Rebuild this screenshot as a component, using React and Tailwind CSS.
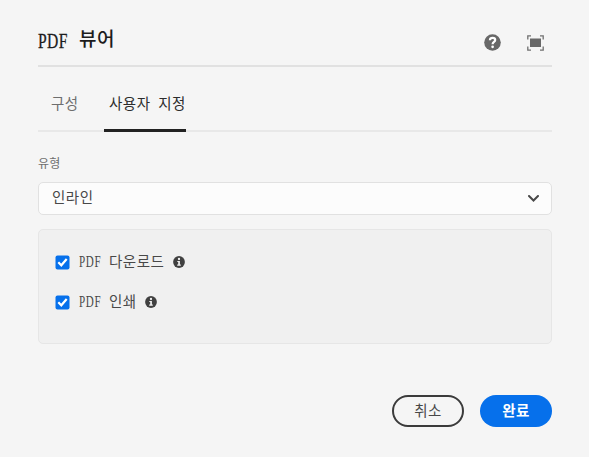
import React from 'react';

function HelpIcon() {
  return (
    <svg className="block h-[17px] w-[17px]" viewBox="0 0 17 17">
      <circle cx="8.5" cy="8.5" r="8.3" fill="#686868" />
      <path d="M5.900 6.200C6 4.700 7.100 3.900 8.600 3.900C10.200 3.900 11.200 4.700 11.200 6C11.200 7.900 8.600 7.900 8.600 10.200" fill="none" stroke="#fff" strokeWidth="2.200" />
      <circle cx="8.600" cy="12.800" r="1.350" fill="#fff" />
    </svg>
  );
}

function FullScreenIcon() {
  return (
    <svg className="block h-4 w-[17px]" viewBox="0 0 17 16">
      <rect x="3" y="3.500" width="11" height="8.500" fill="#686868" />
      <path d="M0.800 4.500V0.800H4M13 0.800H16.200V4.500M16.200 11.500V15.200H13M4 15.200H0.800V11.500" fill="none" stroke="#707070" strokeWidth="1.300" />
    </svg>
  );
}

function InfoIcon() {
  return (
    <svg className="block h-3 w-3" viewBox="0 0 12 12">
      <circle cx="6" cy="6" r="5.900" fill="#404040" />
      <circle cx="6" cy="3" r="1.150" fill="#f2f2f2" />
      <path d="M4.300 4.900H6.900V8.500H7.800V9.700H4.200V8.500H5.200V6H4.300Z" fill="#f2f2f2" />
    </svg>
  );
}

function Option({ label, textWidth }) {
  return (
    <div className="flex h-10 items-center">
      <svg className="block h-[15px] w-[15px] shrink-0" viewBox="0 0 15 15">
        <rect x="0.500" y="0.500" width="14" height="14" rx="2" fill="#0670eb" />
        <path d="M3.300 7.300L6.300 10.300L11.700 4" fill="none" stroke="#fff" strokeWidth="2.200" />
      </svg>
      <span className="ml-[9px] w-[30px] shrink-0 font-['Liberation_Serif',serif] text-[16px] leading-5">
        <span className="inline-block origin-left scale-x-[0.690] tracking-[1px]">PDF</span>
      </span>
      <span className={`-mt-[3px] shrink-0 whitespace-nowrap text-[14.5px] leading-5 tracking-[0.5px] ${textWidth}`}>{label}</span>
      <InfoIcon />
    </div>
  );
}

export default function App() {
  return (
    <main className="h-[457px] w-[589px] bg-[#f5f5f5] px-[38px] font-['Noto_Sans_CJK_KR',sans-serif] text-[#484848]">
      <div className="w-[514px]">
        <header className="flex h-[67px] items-start justify-between border-b-2 border-[#e1e1e1] text-[#1c1c1c]">
          <h1 className="flex pt-[26px] text-[19px] font-medium leading-6">
            <span className="w-[41px] pt-[3px] font-['Liberation_Serif',serif] text-[20px] font-normal leading-6">
              <span className="inline-block origin-left scale-x-[0.780] tracking-[0.5px] [-webkit-text-stroke:0.3px_#1c1c1c]">PDF</span>
            </span>
            <span className="tracking-[0.5px]">뷰어</span>
          </h1>
          <div className="flex items-center gap-[26px] pt-[34px] pr-2">
            <HelpIcon />
            <FullScreenIcon />
          </div>
        </header>
        <nav className="flex h-[65px] items-end border-b-2 border-[#e8e8e8] text-[14.5px] leading-5 tracking-[0.5px]">
          <span className="ml-[13px] w-[53px] pb-[17px] text-[#6e6e6e]">구성</span>
          <span className="-mb-[2px] w-[82px] whitespace-nowrap border-b-3 border-[#222] pb-4 pl-[5px] text-[#2c2c2c] [word-spacing:4px]">사용자 지정</span>
        </nav>
        <div className="pt-[22px] text-xs leading-[18px] tracking-[0.3px] text-[#6e6e6e]">유형</div>
        <div className="mt-[10px] flex h-[33px] items-center justify-between rounded-[5px] border border-[#e1e1e1] bg-[#fcfcfc] pr-3 pl-[13px] text-[14.5px]">
          <span className="-mt-[3px] leading-5 tracking-[0.5px]">인라인</span>
          <svg className="block h-[7px] w-[11px]" viewBox="0 0 11 7">
            <path d="M1 1L5.500 5.500L10 1" fill="none" stroke="#484848" strokeWidth="2" strokeLinecap="round" />
          </svg>
        </div>
        <section className="mt-[14px] h-[115px] rounded-[5px] border border-[#e6e6e6] bg-[#f0f0f0] pt-3 pl-4">
          <Option label="다운로드" textWidth="w-16" />
          <Option label="인쇄" textWidth="w-9" />
        </section>
        <div className="mt-[51px] flex justify-end gap-4 text-[14.5px] leading-5 tracking-[0.5px]">
          <button className="h-8 w-[72px] rounded-full border-2 border-[#3b3b3b] pb-0.5">취소</button>
          <button className="h-8 w-[72px] rounded-full bg-[#0670eb] pb-0.5 font-bold text-white">완료</button>
        </div>
      </div>
    </main>
  );
}
